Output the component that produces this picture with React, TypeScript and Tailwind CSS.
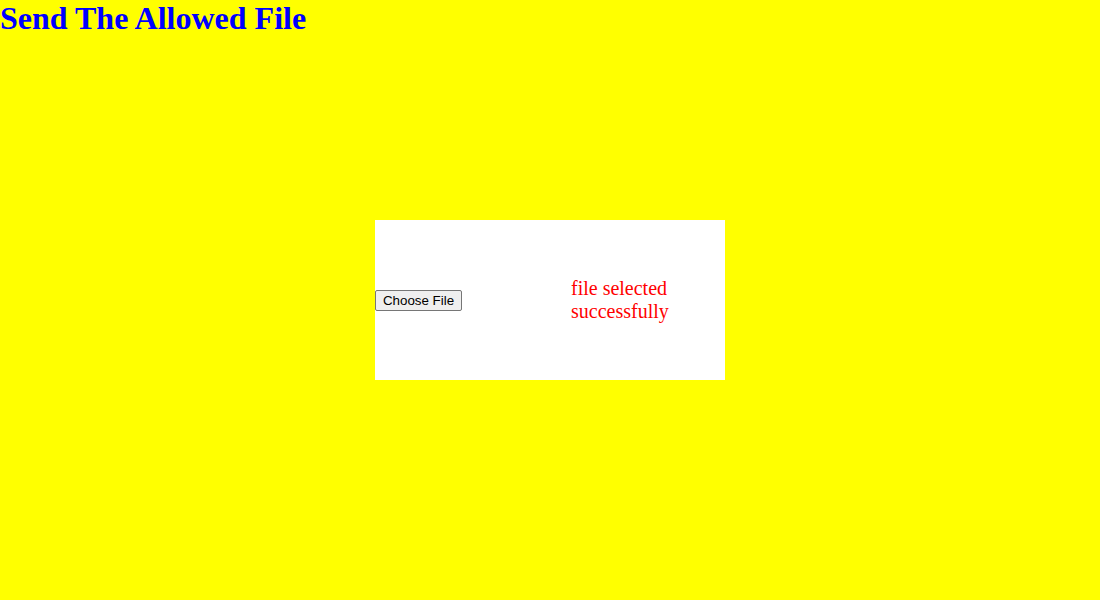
export default function App() {
  return (
    <div className="flex h-[600px] w-full flex-col bg-[#ffff00]" style={{ fontFamily: '"Liberation Serif", "Times New Roman", serif' }}>
      <h1 className="m-0 h-[37px] text-[32px] font-bold leading-[37px] text-[#0000ff]">Send The Allowed File</h1>
      <div className="flex flex-1 items-center justify-center pb-[37px]">
        <div className="flex h-[160px] w-[350px] items-center bg-white">
          <button
            className="h-[21px] w-[87px] rounded-[2px] border border-[#767676] bg-[#efefef] px-0 text-[13.33px] leading-[17px] text-black"
            style={{ fontFamily: '"Liberation Sans", Arial, sans-serif' }}
          >
            Choose File
          </button>
          <div className="ml-[109px] w-[130px] text-[20px] leading-[23px] text-[#ff0000]">file selected successfully</div>
        </div>
      </div>
    </div>
  );
}
